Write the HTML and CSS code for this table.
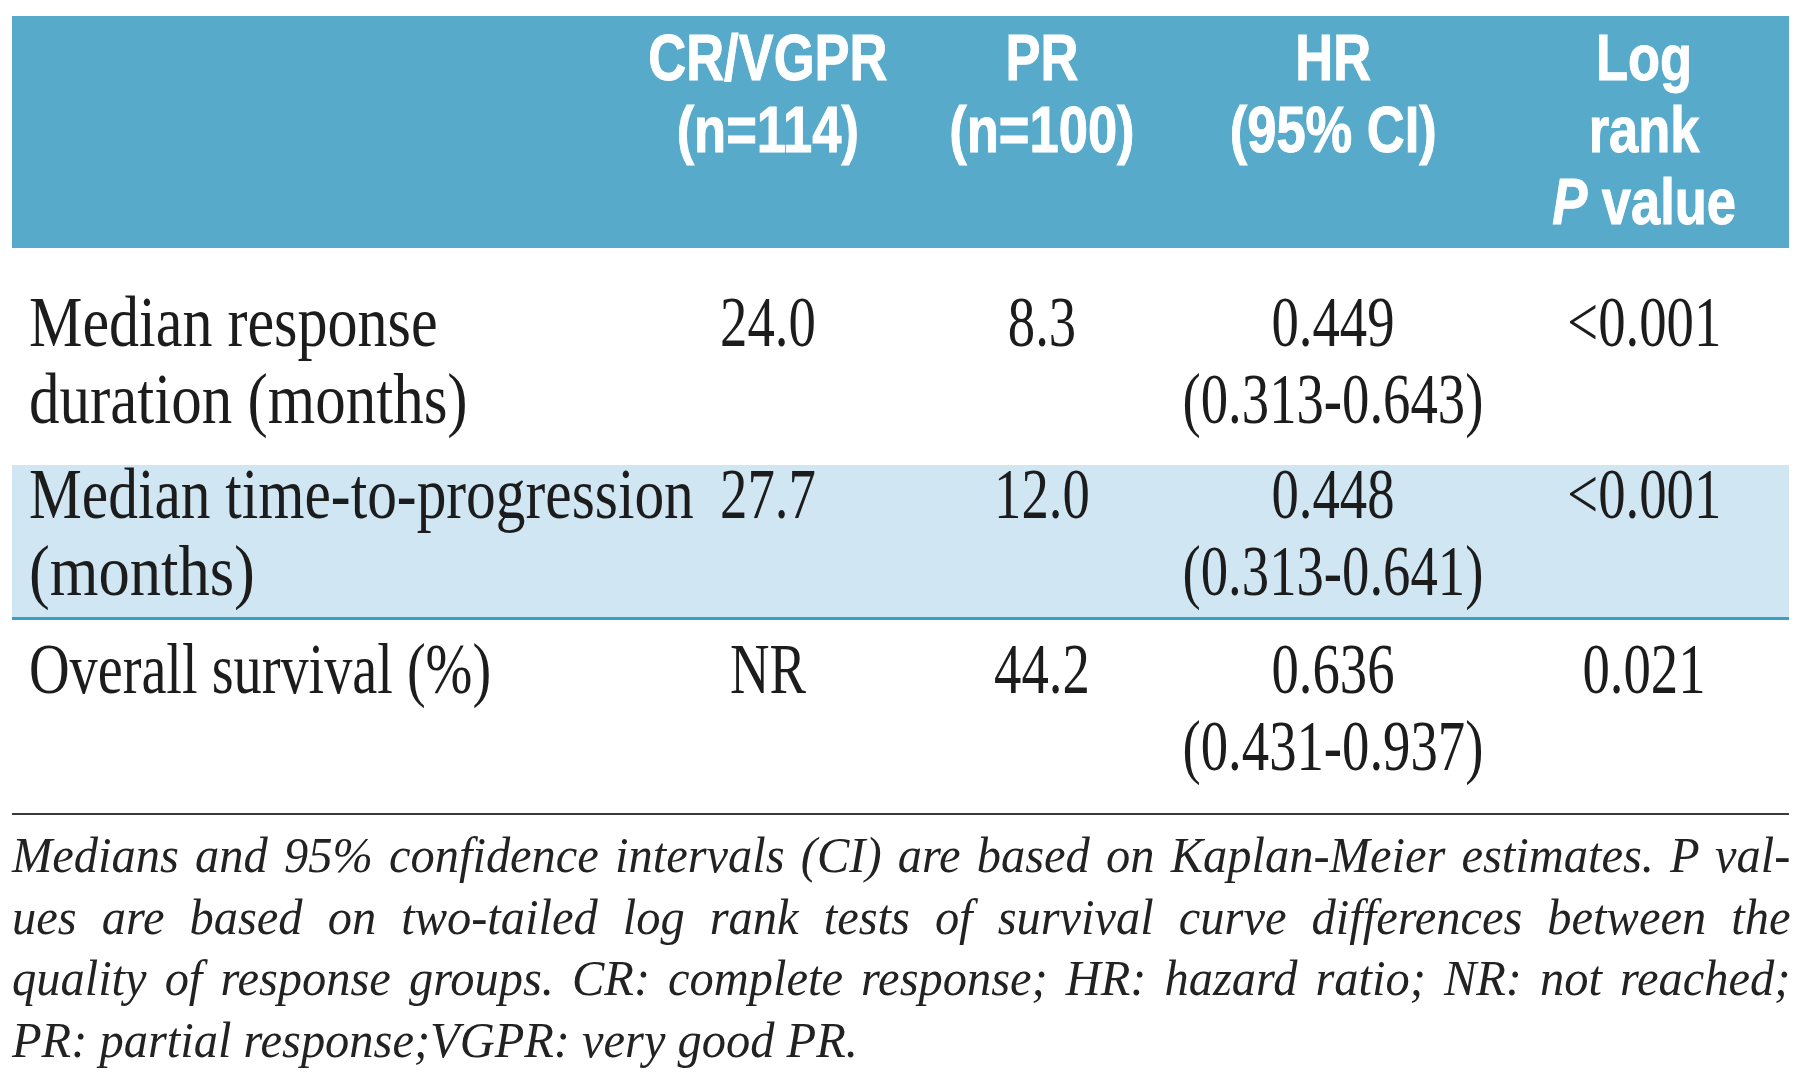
FILE: index.html
```html
<!DOCTYPE html>
<html lang="en">
<head>
<meta charset="utf-8">
<title>Response quality table</title>
<link rel="stylesheet" href="styles.css">
</head>
<body>
<div class="page">
  <div class="tbl">
    <div class="row head">
      <div class="cell left"></div>
      <div class="cell mid"><span class="hd">CR/VGPR<br>(n=114)</span></div>
      <div class="cell mid"><span class="hd">PR<br>(n=100)</span></div>
      <div class="cell mid"><span class="hd">HR<br>(95% CI)</span></div>
      <div class="cell mid"><span class="hd">Log<br>rank<br><i>P</i> value</span></div>
    </div>
    <div class="row r1">
      <div class="cell left"><span class="tx"><span class="ln s834">Median response</span><span class="ln s847">duration (months)</span></span></div>
      <div class="cell mid"><span class="num">24.0</span></div>
      <div class="cell mid"><span class="num">8.3</span></div>
      <div class="cell mid"><span class="num">0.449<br>(0.313-0.643)</span></div>
      <div class="cell mid"><span class="num">&lt;0.001</span></div>
    </div>
    <div class="row r2">
      <div class="cell left"><span class="tx"><span class="ln">Median time-to-progression</span><span class="ln s869">(months)</span></span></div>
      <div class="cell mid"><span class="num">27.7</span></div>
      <div class="cell mid"><span class="num">12.0</span></div>
      <div class="cell mid"><span class="num">0.448<br>(0.313-0.641)</span></div>
      <div class="cell mid"><span class="num">&lt;0.001</span></div>
    </div>
    <div class="row r3">
      <div class="cell left"><span class="tx"><span class="ln s781">Overall survival (%)</span></span></div>
      <div class="cell mid"><span class="num">NR</span></div>
      <div class="cell mid"><span class="num">44.2</span></div>
      <div class="cell mid"><span class="num">0.636<br>(0.431-0.937)</span></div>
      <div class="cell mid"><span class="num">0.021</span></div>
    </div>
  </div>
  <div class="note">
    <p class="fl">Medians and 95% confidence intervals (CI) are based on Kaplan-Meier estimates. P val-</p>
    <p class="fl">ues are based on two-tailed log rank tests of survival curve differences between the</p>
    <p class="fl">quality of response groups. CR: complete response; HR: hazard ratio; NR: not reached;</p>
    <p class="fl last">PR: partial response;VGPR: very good PR.</p>
  </div>
</div>
</body>
</html>
```
FILE: styles.css
```css
html, body {
  margin: 0;
  padding: 0;
  background: #ffffff;
  overflow: hidden;
}

.page {
  padding: 16px 0 0 12px;
  width: 1777px;
}

.tbl {
  display: flex;
  flex-direction: column;
}

.row {
  display: grid;
  grid-template-columns: 607px 298px 250px 332px 290px;
  box-sizing: border-box;
}

.cell {
  display: flex;
  align-items: flex-start;
  min-width: 0;
}

.cell.left {
  justify-content: flex-start;
  padding-left: 17px;
}

.cell.mid {
  justify-content: center;
}

/* header */
.head {
  height: 232px;
  padding-top: 6px;
  background: #58aacb;
}

.hd {
  display: block;
  flex: none;
  white-space: nowrap;
  text-align: center;
  color: #ffffff;
  font-family: "Liberation Sans", Arial, sans-serif;
  font-weight: 700;
  font-size: 64px;
  line-height: 72px;
  -webkit-text-stroke: 1px #ffffff;
  transform: scaleX(0.82);
  transform-origin: center top;
}

.hd i {
  font-style: italic;
}

/* body text */
.tx, .num {
  display: block;
  flex: none;
  white-space: nowrap;
  color: #1c1c1c;
  font-family: "Liberation Serif", "Times New Roman", serif;
  font-size: 72px;
  line-height: 77px;
}

.ln {
  display: block;
  width: max-content;
  transform: scaleX(0.825);
  transform-origin: left top;
}

.ln.s834 { transform: scaleX(0.834); }
.ln.s847 { transform: scaleX(0.847); }
.ln.s869 { transform: scaleX(0.869); }
.ln.s781 { transform: scaleX(0.781); }

.num {
  text-align: center;
  transform: scaleX(0.76);
  transform-origin: center top;
}

.r1 {
  height: 217px;
  padding-top: 36px;
}

.r2 {
  height: 155px;
  background: #d0e7f3;
  border-bottom: 3px solid #3b9ec8;
}

.r2 .tx, .r2 .num {
  margin-top: -9px;
}

.r3 {
  height: 195px;
  padding-top: 11px;
  border-bottom: 2px solid #3a3a3a;
}

/* footnote */
.note {
  padding-top: 10px;
}

.fl {
  margin: 0;
  width: 1872px;
  font-family: "Liberation Serif", "Times New Roman", serif;
  font-style: italic;
  font-size: 51px;
  line-height: 61.5px;
  color: #222222;
  text-align: justify;
  text-align-last: justify;
  transform: scaleX(0.95);
  transform-origin: left top;
}

.fl.last {
  text-align: left;
  text-align-last: left;
}
```
